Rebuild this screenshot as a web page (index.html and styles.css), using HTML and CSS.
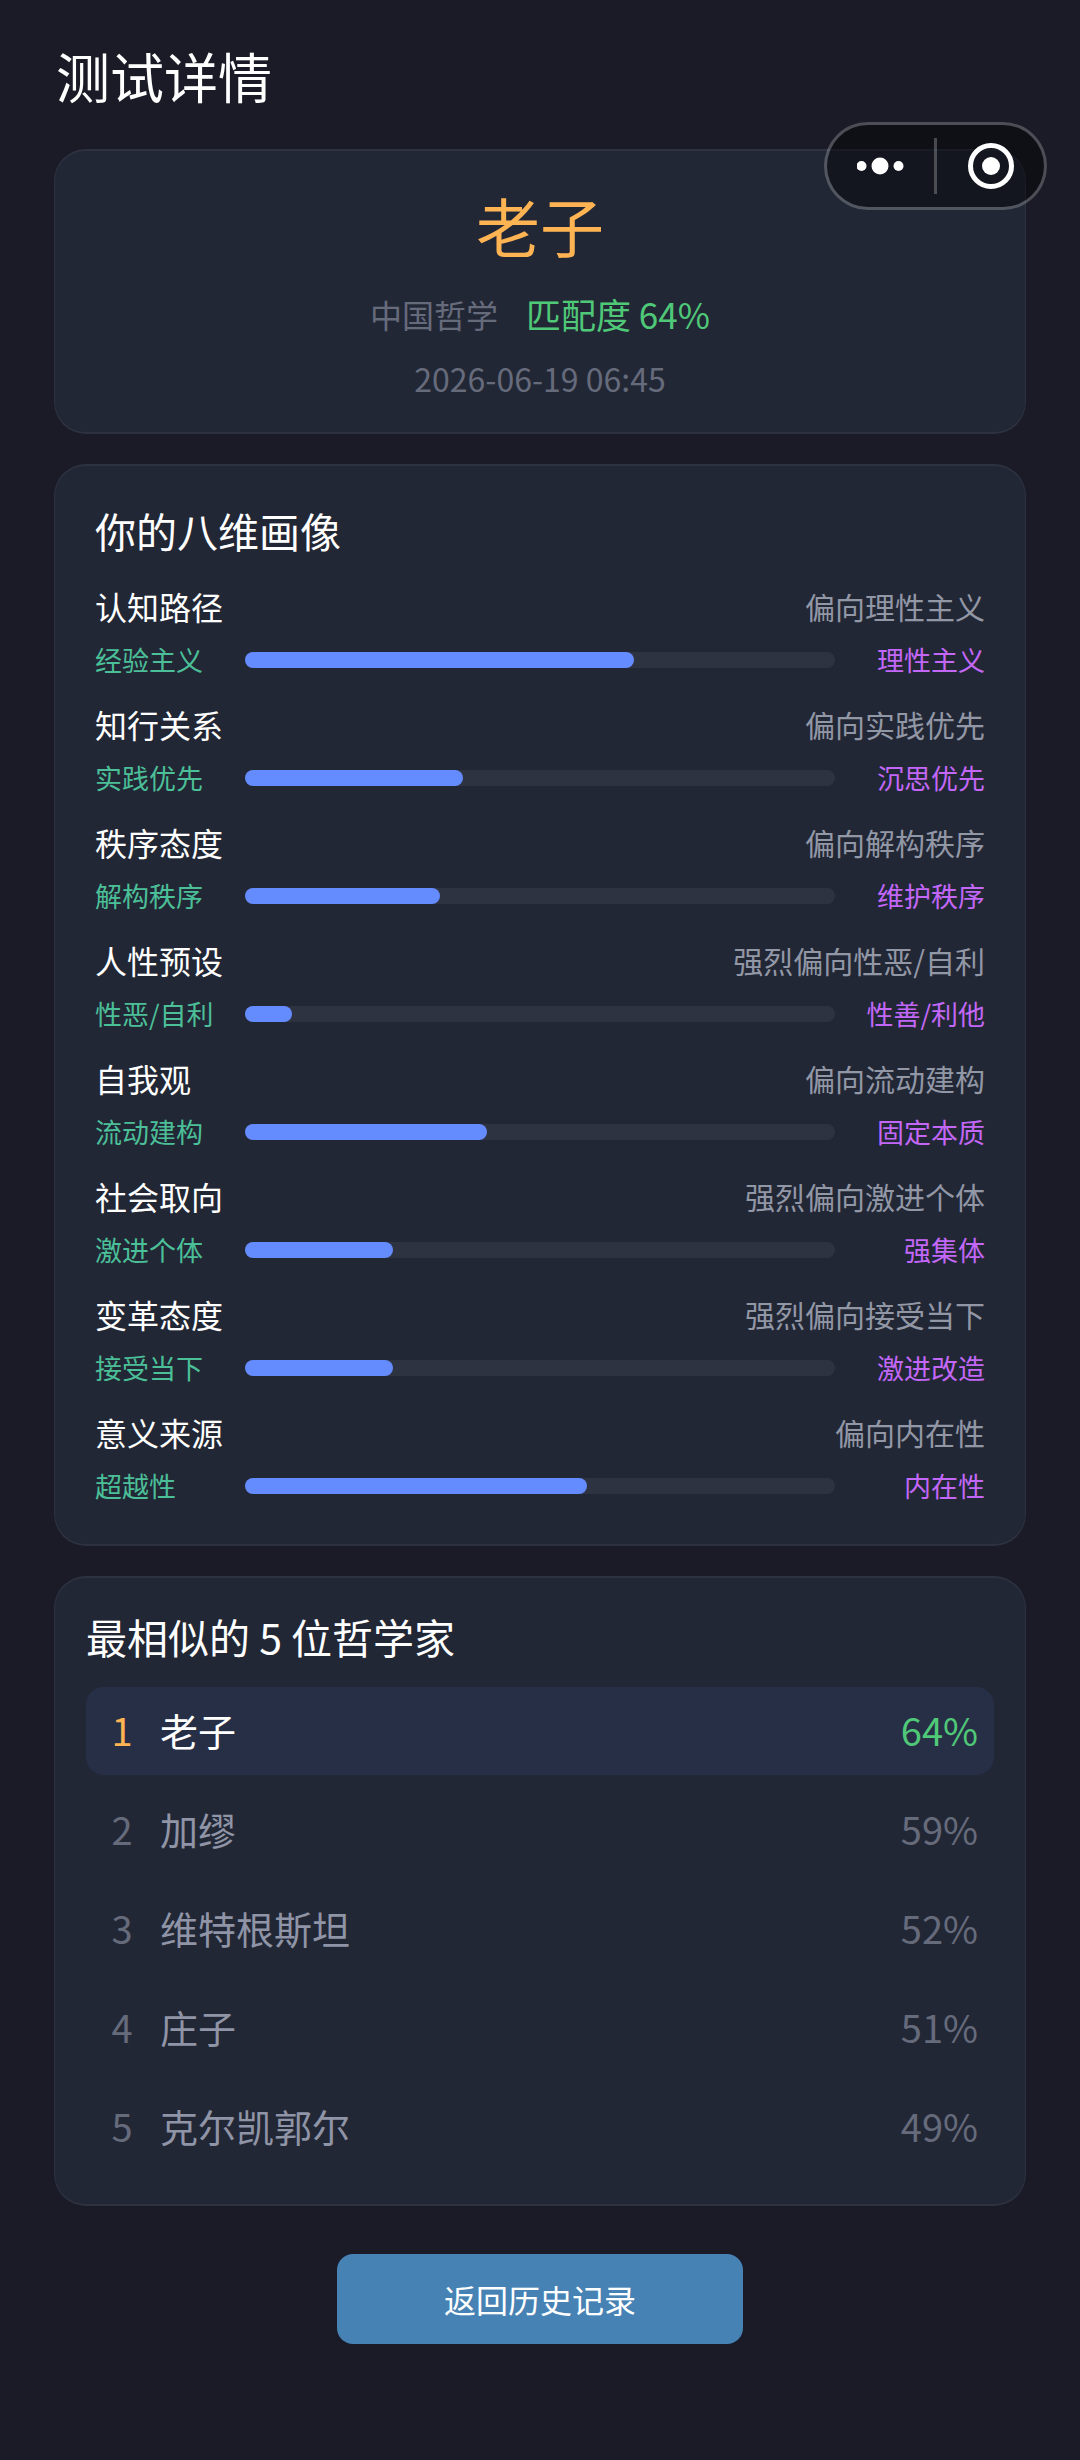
FILE: index.html
```
<!DOCTYPE html>
<html lang="zh-CN">
<head>
  <meta charset="UTF-8">
  <meta name="viewport" content="width=device-width, initial-scale=1.0">
  <title>测试详情</title>
  <link rel="stylesheet" href="styles.css">
</head>
<body>
  <div class="capsule">
    <button class="capsule-btn" type="button" aria-label="更多">
      <svg width="48" height="48" viewBox="0 0 48 48" fill="#fff">
        <circle cx="4.500" cy="24" r="5"/>
        <circle cx="23" cy="24" r="8.500"/>
        <circle cx="41.500" cy="24" r="5"/>
      </svg>
    </button>
    <span class="capsule-line"></span>
    <button class="capsule-btn" type="button" aria-label="关闭">
      <svg width="48" height="48" viewBox="0 0 48 48">
        <circle cx="24" cy="24" r="20.500" fill="none" stroke="#fff" stroke-width="5"/>
        <circle cx="24" cy="24" r="9" fill="#fff"/>
      </svg>
    </button>
  </div>

  <div class="container">
    <h1>测试详情</h1>

    <div class="card result">
      <div class="result-name">老子</div>
      <div class="result-meta">
        <span class="school">中国哲学</span>
        <span class="match">匹配度 64%</span>
      </div>
      <div class="result-time">2026-06-19 06:45</div>
    </div>

    <div class="card portrait">
      <h2>你的八维画像</h2>
      <div class="dim">
        <div class="dim-head"><span class="dim-name">认知路径</span><span class="dim-level">偏向理性主义</span></div>
        <div class="dim-row"><span class="left">经验主义</span><div class="bar"><div class="fill" style="width: 66%"></div></div><span class="right">理性主义</span></div>
      </div>
      <div class="dim">
        <div class="dim-head"><span class="dim-name">知行关系</span><span class="dim-level">偏向实践优先</span></div>
        <div class="dim-row"><span class="left">实践优先</span><div class="bar"><div class="fill" style="width: 37%"></div></div><span class="right">沉思优先</span></div>
      </div>
      <div class="dim">
        <div class="dim-head"><span class="dim-name">秩序态度</span><span class="dim-level">偏向解构秩序</span></div>
        <div class="dim-row"><span class="left">解构秩序</span><div class="bar"><div class="fill" style="width: 33%"></div></div><span class="right">维护秩序</span></div>
      </div>
      <div class="dim">
        <div class="dim-head"><span class="dim-name">人性预设</span><span class="dim-level">强烈偏向性恶/自利</span></div>
        <div class="dim-row"><span class="left">性恶/自利</span><div class="bar"><div class="fill" style="width: 8%"></div></div><span class="right">性善/利他</span></div>
      </div>
      <div class="dim">
        <div class="dim-head"><span class="dim-name">自我观</span><span class="dim-level">偏向流动建构</span></div>
        <div class="dim-row"><span class="left">流动建构</span><div class="bar"><div class="fill" style="width: 41%"></div></div><span class="right">固定本质</span></div>
      </div>
      <div class="dim">
        <div class="dim-head"><span class="dim-name">社会取向</span><span class="dim-level">强烈偏向激进个体</span></div>
        <div class="dim-row"><span class="left">激进个体</span><div class="bar"><div class="fill" style="width: 25%"></div></div><span class="right">强集体</span></div>
      </div>
      <div class="dim">
        <div class="dim-head"><span class="dim-name">变革态度</span><span class="dim-level">强烈偏向接受当下</span></div>
        <div class="dim-row"><span class="left">接受当下</span><div class="bar"><div class="fill" style="width: 25%"></div></div><span class="right">激进改造</span></div>
      </div>
      <div class="dim">
        <div class="dim-head"><span class="dim-name">意义来源</span><span class="dim-level">偏向内在性</span></div>
        <div class="dim-row"><span class="left">超越性</span><div class="bar"><div class="fill" style="width: 58%"></div></div><span class="right">内在性</span></div>
      </div>
    </div>

    <div class="card similar">
      <h2>最相似的 5 位哲学家</h2>
      <ol class="rank-list">
        <li class="rank-item top"><span class="rank">1</span><span class="name">老子</span><span class="percent">64%</span></li>
        <li class="rank-item"><span class="rank">2</span><span class="name">加缪</span><span class="percent">59%</span></li>
        <li class="rank-item"><span class="rank">3</span><span class="name">维特根斯坦</span><span class="percent">52%</span></li>
        <li class="rank-item"><span class="rank">4</span><span class="name">庄子</span><span class="percent">51%</span></li>
        <li class="rank-item"><span class="rank">5</span><span class="name">克尔凯郭尔</span><span class="percent">49%</span></li>
      </ol>
    </div>

    <button class="back-btn" type="button">返回历史记录</button>
  </div>
</body>
</html>
```
FILE: styles.css
```
* {
  box-sizing: border-box;
}

body {
  margin: 0;
  min-height: 100vh;
  background-color: #1a1b26;
  color: #fff;
  font-family: "Noto Sans CJK SC", sans-serif;
}

button {
  font-family: inherit;
  border: none;
  padding: 0;
  cursor: pointer;
}

.container {
  padding: 36px 54px 96px;
}

h1 {
  margin: 0 2px 33px;
  font-size: 54px;
  font-weight: 400;
  line-height: 80px;
}

h2 {
  margin: 0;
  font-size: 41px;
  font-weight: 400;
  line-height: 60px;
}

/* Floating menu in the top right corner */
.capsule {
  position: absolute;
  top: 122px;
  right: 33px;
  z-index: 10;
  display: flex;
  align-items: center;
  width: 223px;
  height: 88px;
  border: 3px solid rgba(255, 255, 255, 0.22);
  border-radius: 44px;
  background-color: rgba(0, 0, 0, 0.42);
  background-clip: padding-box;
}

.capsule-btn {
  flex: 1;
  display: flex;
  justify-content: center;
  background: none;
}

.capsule-line {
  width: 3px;
  height: 56px;
  background-color: rgba(255, 255, 255, 0.24);
}

.card {
  margin-bottom: 30px;
  border: solid #2d3140;
  border-width: 2px 1px;
  border-radius: 32px;
  background-color: #222735;
}

/* Result */
.result {
  padding: 27px 42px 30px;
  text-align: center;
}

.result-name {
  color: #ffb454;
  font-size: 64px;
  line-height: 92px;
}

.result-meta {
  display: flex;
  justify-content: center;
  align-items: center;
  gap: 28px;
  margin-top: 19px;
  line-height: 50px;
}

.school {
  color: #666b7c;
  font-size: 32px;
}

.match {
  color: #4fc878;
  font-size: 35px;
}

.result-time {
  margin-top: 15px;
  color: #666b7c;
  font-size: 32px;
  line-height: 48px;
}

/* Eight dimensions */
.portrait {
  padding: 34px 40px 40px;
}

.portrait h2 {
  margin-bottom: 22px;
}

.dim {
  margin-bottom: 22px;
}

.dim:last-child {
  margin-bottom: 0;
}

.dim-head {
  display: flex;
  justify-content: space-between;
  line-height: 48px;
}

.dim-name {
  font-size: 32px;
}

.dim-level {
  color: #9297a6;
  font-size: 30px;
}

.dim-row {
  display: flex;
  align-items: center;
  gap: 20px;
  margin-top: 12px;
  font-size: 27px;
  line-height: 36px;
}

.left,
.right {
  width: 130px;
  white-space: nowrap;
}

.left {
  color: #4bbf98;
}

.right {
  color: #c267f8;
  text-align: right;
}

.bar {
  flex: 1;
  height: 16px;
  border-radius: 8px;
  background-color: #2d3341;
}

.fill {
  height: 100%;
  border-radius: 8px;
  background-color: #658cff;
}

/* Similar philosophers */
.similar {
  padding: 28px 31px 33px;
}

.similar h2 {
  margin-bottom: 21px;
}

.rank-list {
  display: flex;
  flex-direction: column;
  gap: 11px;
  margin: 0;
  padding: 0;
  list-style: none;
}

.rank-item {
  display: flex;
  align-items: center;
  gap: 18px;
  height: 88px;
  padding: 0 16px 3px;
  border-radius: 18px;
  color: #8f94a6;
  font-size: 38px;
}

.rank {
  width: 40px;
  color: #666b7c;
  text-align: center;
}

.name {
  flex: 1;
}

.percent {
  color: #666b7c;
}

.top {
  background-color: #272f47;
  color: #fff;
}

.top .rank {
  color: #ffb454;
}

.top .percent {
  color: #4fc878;
}

.back-btn {
  display: block;
  min-width: 406px;
  margin: 48px auto 0;
  padding: 21px 48px;
  border-radius: 16px;
  background-color: #4682b4;
  color: #fff;
  font-size: 32px;
  line-height: 48px;
}
```
